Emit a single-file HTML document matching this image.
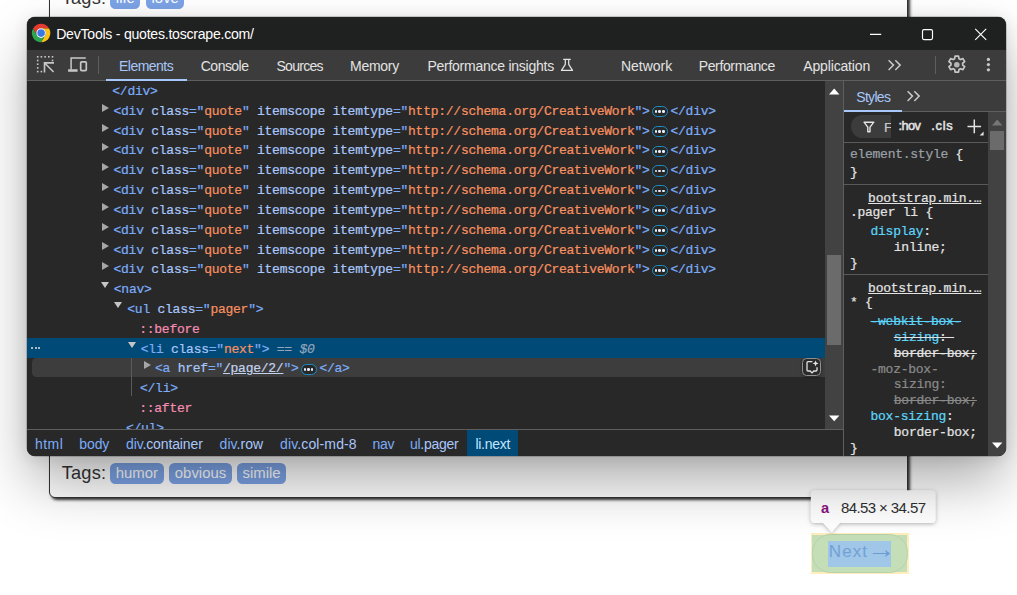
<!DOCTYPE html>
<html lang="en">
<head>
<meta charset="utf-8">
<title>DevTools - quotes.toscrape.com/</title>
<style>
*{box-sizing:border-box;margin:0;padding:0}
html,body{width:1017px;height:595px;overflow:hidden;background:#fff}
body{position:relative;font-family:"Liberation Sans",Arial,sans-serif;color:#333}
.abs{position:absolute}
/* ---------- page behind ---------- */
.qbox{position:absolute;left:49px;width:859px;border:1px solid #333;border-radius:6px;box-shadow:2px 2px 3px #333;background:#fff}
.tagsrow{position:absolute;left:62px;height:24px;white-space:nowrap}
.tagsrow .lbl{position:absolute;left:-.3px;top:-1.4px;font-size:18.2px;line-height:24px;color:#333;letter-spacing:.2px}
.tag{position:absolute;top:1.3px;height:20.6px;border-radius:5.5px;background:#7ca3e6;color:#fff;font-size:14.9px;line-height:20.6px;text-align:center}
/* ---------- devtools window ---------- */
#win{position:absolute;left:27px;top:17px;width:978.7px;height:438.6px;border-radius:8px;background:#282828;
 box-shadow:0 0 0 .5px rgba(0,0,0,.35),0 28px 56px -2px rgba(0,0,0,.32),0 2px 16px rgba(0,0,0,.11);overflow:hidden}
#title{position:absolute;left:0;top:0;right:0;height:33px;background:#1f2020}
#title .t{position:absolute;left:29.2px;top:8px;font-size:14.1px;line-height:18px;color:#fff;white-space:nowrap;letter-spacing:-.25px}
#tb{position:absolute;left:0;top:33px;right:0;height:31.3px;background:#3c3c3c;border-bottom:1px solid #5e5e5e}
.tab{position:absolute;top:7.2px;font-size:14px;line-height:18px;color:#e3e3e3;white-space:nowrap}
.tab.sel{color:#a8c7fa}
/* elements tree */
#tree{position:absolute;left:0;top:64.3px;width:798px;height:348px;background:#282828;overflow:hidden;
 font-family:"Liberation Mono","DejaVu Sans Mono",monospace;font-size:13px;letter-spacing:-.252px;color:#e3e3e3;-webkit-text-stroke:.22px}
.row{position:absolute;left:0;width:798px;height:19.82px;line-height:19.82px;white-space:pre}
.row span.c{position:absolute;top:1.6px}
.tg{color:#7cacf8}.an{color:#a8c7fa}.av{color:#f89060}.ps{color:#f58cb2}.gr{color:#9aa0a6}
.arr{position:absolute;width:0;height:0}
.arr.r{border-left:7px solid #a6a6a6;border-top:4.1px solid transparent;border-bottom:4.1px solid transparent}
.arr.d{border-top:6.9px solid #c6c6c6;border-left:4.6px solid transparent;border-right:4.6px solid transparent}
.pill{position:absolute;width:16.4px;height:11.2px;border:1.5px solid #1b8fc4;border-radius:5.6px;background:#282828}
.pill i{position:absolute;top:3.3px;width:2.7px;height:2.7px;border-radius:50%;background:#e4eefb}
.selrow{background:#004a77}
.dots{position:absolute;left:4px;top:8.6px;width:10px;height:2px}
.dots i{position:absolute;top:0;width:2px;height:2px;border-radius:1px;background:#e3e3e3}
.dots i:nth-child(1){left:0}.dots i:nth-child(2){left:3.7px}.dots i:nth-child(3){left:7.4px}
.eq{color:#93a5ba}.eq em{font-style:italic}
.lk{color:#c3d3ee;text-decoration:underline}
.hovbg{position:absolute;left:5.4px;top:.3px;width:793px;height:18.7px;border-radius:4.5px 0 0 4.5px;background:#3d3d3d}
.ai{position:absolute;left:775px;top:.3px;width:19.2px;height:17.8px;border:1px solid #909090;border-radius:4.5px;background:#2b2b2b;box-shadow:0 1px 3px rgba(0,0,0,.4)}
.guide{position:absolute;left:104px;top:276.6px;width:1px;height:38.6px;background:#5a5a5a}
.row .pill{position:relative;display:inline-block;vertical-align:-2.4px;margin:0 2.4px 0 2.1px}
/* sidebar */
#side{position:absolute;left:816.3px;top:64.3px;right:0;bottom:0;background:#282828;border-left:1px solid #5e5e5e;
 font-family:"Liberation Mono","DejaVu Sans Mono",monospace;font-size:13px;letter-spacing:-.252px;color:#e3e3e3;-webkit-text-stroke:.22px}
.sl{position:absolute;white-space:pre;line-height:16px;height:16px}
.cy{color:#5cd5fb}.dim{color:#8a8a8a}.st{text-decoration:line-through}
.lnk{text-decoration:underline}
.sep{position:absolute;left:0;width:144px;height:1px;background:#5a5a5a}
/* crumbs */
#crumbs{position:absolute;left:0;top:412.3px;width:818px;height:27px;background:#282828;border-top:1px solid #5e5e5e}
.cr{position:absolute;top:4.6px;font-size:14px;line-height:18px;white-space:nowrap;color:#a8c7fa}
.cr b{font-weight:normal;color:#7cacf8}
</style>
</head>
<body>

<!-- page behind the DevTools window -->
<div class="qbox" style="top:-80px;height:110px"></div>
<div class="tagsrow" style="top:-12.9px">
  <span class="lbl">Tags:</span>
  <span class="tag" style="left:48.3px;width:30.2px">life</span>
  <span class="tag" style="left:84.2px;width:38.1px">love</span>
</div>
<div class="qbox" style="top:380px;height:117.8px"></div>
<div class="tagsrow" style="top:462px">
  <span class="lbl">Tags:</span>
  <span class="tag" style="left:48.2px;width:53.4px">humor</span>
  <span class="tag" style="left:107.2px;width:62.6px">obvious</span>
  <span class="tag" style="left:175.4px;width:48.4px">simile</span>
</div>

<!-- inspect highlight on the Next link -->
<div class="abs" style="left:810.9px;top:533.1px;width:97.9px;height:40.6px;background:#ffeebc"></div>
<div class="abs" style="left:812.2px;top:534.5px;width:95px;height:37.8px;background:#c4dfb8"></div>
<div class="abs" style="left:811.6px;top:533.9px;width:96.2px;height:39px;border:1px solid #b7d2ab;border-radius:18.5px"></div>
<div class="abs" style="left:828px;top:540.5px;width:63.2px;height:26.1px;background:#a0c6e8"></div>
<div class="abs" id="next" style="left:828.8px;top:540.2px;font-size:17px;line-height:24px;color:#72a1d5;white-space:nowrap;letter-spacing:1.1px">Next</div>
<div class="abs" id="narr" style="left:867.3px;top:537.7px;font-size:17px;line-height:24px;color:#6a9bd2;white-space:nowrap;transform:scale(1.7,1.5);transform-origin:0 50%">→</div>

<!-- tooltip -->
<svg class="abs" style="left:796px;top:478px;overflow:visible" width="155" height="70" viewBox="0 0 155 70">
  <defs><filter id="tsh" x="-20%" y="-30%" width="140%" height="170%"><feDropShadow dx="0" dy="1" stdDeviation="2.2" flood-color="#000" flood-opacity=".3"/></filter></defs>
  <path filter="url(#tsh)" fill="#fff" d="M18.9 12.2H135.5a4 4 0 0 1 4 4V40.9a4 4 0 0 1 -4 4H43.9L35.6 54.1L27.3 44.9H18.9a4 4 0 0 1 -4 -4V16.2a4 4 0 0 1 4 -4Z"/>
</svg>
<div class="abs" style="left:821px;top:498.7px;font-size:14.6px;line-height:18px;font-weight:bold;color:#881280">a</div>
<div class="abs" id="dims" style="left:841px;top:498.9px;font-size:15px;line-height:18px;color:#303030;white-space:nowrap;letter-spacing:-.6px">84.53 × 34.57</div>

<!-- DevTools window -->
<div id="win">
  <div id="title">
    <svg class="abs" style="left:3.85px;top:5.85px" width="20.2" height="20.2" viewBox="0 0 48 48">
      <path d="M4.95 13A22 22 0 0 1 43.05 13L24 13A11 11 0 0 0 14.47 29.5Z" fill="#e33b2e"/>
      <path d="M43.05 13A22 22 0 0 1 24 46L33.53 29.5A11 11 0 0 0 24 13Z" fill="#fbc116"/>
      <path d="M24 46A22 22 0 0 1 4.95 13L14.47 29.5A11 11 0 0 0 33.53 29.5Z" fill="#2da44e"/>
      <circle cx="24" cy="24" r="11.4" fill="#fff"/>
      <circle cx="24" cy="24" r="9" fill="#3b78e7"/>
    </svg>
    <div class="t">DevTools - quotes.toscrape.com/</div>
    <svg class="abs" style="left:836px;top:6px" width="130" height="24" viewBox="0 0 130 24" fill="none" stroke="#fff" stroke-width="1.15">
      <path d="M7 11.3H18.2"/>
      <rect x="59.5" y="6.6" width="10" height="10" rx="1.5"/>
      <path d="M112.2 5.9L123.2 16.9M123.2 5.9L112.2 16.9"/>
    </svg>
  </div>

  <div id="tb">
    <svg class="abs" style="left:9px;top:5px" width="20" height="20" viewBox="0 0 20 20" fill="#c7c7c7">
      <rect x="0.9" y="1" width="1.6" height="1.6"/><rect x="4.6" y="1" width="1.6" height="1.6"/><rect x="8.3" y="1" width="1.6" height="1.6"/><rect x="12" y="1" width="1.6" height="1.6"/><rect x="15.7" y="1" width="1.6" height="1.6"/>
      <rect x="0.9" y="4.7" width="1.6" height="1.6"/><rect x="0.9" y="8.4" width="1.6" height="1.6"/><rect x="0.9" y="12.1" width="1.6" height="1.6"/><rect x="0.9" y="15.8" width="1.6" height="1.6"/>
      <rect x="15.7" y="4.7" width="1.6" height="1.6"/><rect x="4.6" y="15.8" width="1.6" height="1.6"/>
      <path d="M8.5 17.5V7.9H18M8.9 8.3L17.6 17" fill="none" stroke="#c7c7c7" stroke-width="1.6"/>
    </svg>
    <svg class="abs" style="left:40px;top:6px" width="22" height="18" viewBox="0 0 22 18" fill="none" stroke="#c7c7c7">
      <path d="M4.1 13.6V2H18.8" stroke-width="1.5"/>
      <path d="M1.1 14.5H10.6" stroke-width="2.3"/>
      <rect x="13.7" y="5.8" width="5.6" height="8.8" rx="1" stroke-width="1.7"/>
    </svg>
    <div class="abs" style="left:71px;top:6px;width:1px;height:17.6px;background:#5e5e5e"></div>
    <svg class="abs" style="left:533px;top:8px" width="14" height="14" viewBox="0 0 14 14" fill="none" stroke="#e3e3e3" stroke-width="1.25" stroke-linejoin="round" stroke-linecap="round">
      <path d="M3.7 1.4H10.3M5.3 1.6V6.3L1.5 12.4H12.5L8.7 6.3V1.6"/>
    </svg>
    <svg class="abs" style="left:860px;top:9px" width="16" height="12" viewBox="0 0 16 12" fill="none" stroke="#c7c7c7" stroke-width="1.5">
      <path d="M1.6 1.2L6.5 6.1L1.6 11M8.3 1.2L13.2 6.1L8.3 11"/>
    </svg>
    <div class="abs" style="left:908px;top:6px;width:1px;height:17.6px;background:#5e5e5e"></div>
    <svg class="abs" style="left:918.75px;top:3.9px" width="21.6" height="21.6" viewBox="0 0 24 24" fill="none" stroke="#c7c7c7" stroke-width="1.9" stroke-linejoin="round">
      <path d="M10.1 2.3h3.8l.5 2.9 1.7.95 2.75-1.05 1.9 3.3-2.25 1.9v1.9l2.25 1.9-1.9 3.3-2.75-1.05-1.7.95-.5 2.9h-3.8l-.5-2.9-1.7-.95-2.75 1.05-1.9-3.3 2.25-1.9v-1.9l-2.25-1.9 1.9-3.3 2.75 1.05 1.7-.95z"/>
      <circle cx="12" cy="12" r="3.1" fill="#b4b4b4" stroke="none"/>
    </svg>
    <svg class="abs" style="left:957px;top:6px" width="9" height="20" viewBox="0 0 9 20" fill="#c7c7c7">
      <circle cx="4.4" cy="3.4" r="1.65"/><circle cx="4.4" cy="8.6" r="1.65"/><circle cx="4.4" cy="13.8" r="1.65"/>
    </svg>
    <div class="tab sel" id="t1" style="left:92.00px;letter-spacing:-0.529px">Elements</div>
    <div class="abs" style="left:79.3px;top:28.9px;width:81px;height:2.4px;background:#a8c7fa"></div>
    <div class="tab" id="t2" style="left:173.80px;letter-spacing:-0.534px">Console</div>
    <div class="tab" id="t3" style="left:249.50px;letter-spacing:-0.733px">Sources</div>
    <div class="tab" id="t4" style="left:323.00px;letter-spacing:-0.280px">Memory</div>
    <div class="tab" id="t5" style="left:400.40px;letter-spacing:-0.247px">Performance insights</div>
    <div class="tab" id="t6" style="left:593.90px;letter-spacing:-0.017px">Network</div>
    <div class="tab" id="t7" style="left:671.70px;letter-spacing:-0.360px">Performance</div>
    <div class="tab" id="t8" style="left:776.30px;letter-spacing:-0.160px">Application</div>
  </div>

  <div id="tree">
    <div class="row" style="top:-0.90px"><span class="c" style="left:85.3px"><span class="tg">&lt;/div&gt;</span></span></div>
    <div class="row" style="top:18.92px"><i class="arr r" style="left:75px;top:3.5px"></i><span class="c" style="left:86.5px"><span class="tg">&lt;div</span> <span class="an">class</span><span class="tg">="</span><span class="av">quote</span><span class="tg">"</span> <span class="an">itemscope</span> <span class="an">itemtype</span><span class="tg">="</span><span class="av">http://schema.org/CreativeWork</span><span class="tg">"&gt;</span><span class="pill"><i style="left:2px"></i><i style="left:5.6px"></i><i style="left:9.2px"></i></span><span class="tg">&lt;/div&gt;</span></span></div>
    <div class="row" style="top:38.74px"><i class="arr r" style="left:75px;top:3.5px"></i><span class="c" style="left:86.5px"><span class="tg">&lt;div</span> <span class="an">class</span><span class="tg">="</span><span class="av">quote</span><span class="tg">"</span> <span class="an">itemscope</span> <span class="an">itemtype</span><span class="tg">="</span><span class="av">http://schema.org/CreativeWork</span><span class="tg">"&gt;</span><span class="pill"><i style="left:2px"></i><i style="left:5.6px"></i><i style="left:9.2px"></i></span><span class="tg">&lt;/div&gt;</span></span></div>
    <div class="row" style="top:58.56px"><i class="arr r" style="left:75px;top:3.5px"></i><span class="c" style="left:86.5px"><span class="tg">&lt;div</span> <span class="an">class</span><span class="tg">="</span><span class="av">quote</span><span class="tg">"</span> <span class="an">itemscope</span> <span class="an">itemtype</span><span class="tg">="</span><span class="av">http://schema.org/CreativeWork</span><span class="tg">"&gt;</span><span class="pill"><i style="left:2px"></i><i style="left:5.6px"></i><i style="left:9.2px"></i></span><span class="tg">&lt;/div&gt;</span></span></div>
    <div class="row" style="top:78.38px"><i class="arr r" style="left:75px;top:3.5px"></i><span class="c" style="left:86.5px"><span class="tg">&lt;div</span> <span class="an">class</span><span class="tg">="</span><span class="av">quote</span><span class="tg">"</span> <span class="an">itemscope</span> <span class="an">itemtype</span><span class="tg">="</span><span class="av">http://schema.org/CreativeWork</span><span class="tg">"&gt;</span><span class="pill"><i style="left:2px"></i><i style="left:5.6px"></i><i style="left:9.2px"></i></span><span class="tg">&lt;/div&gt;</span></span></div>
    <div class="row" style="top:98.20px"><i class="arr r" style="left:75px;top:3.5px"></i><span class="c" style="left:86.5px"><span class="tg">&lt;div</span> <span class="an">class</span><span class="tg">="</span><span class="av">quote</span><span class="tg">"</span> <span class="an">itemscope</span> <span class="an">itemtype</span><span class="tg">="</span><span class="av">http://schema.org/CreativeWork</span><span class="tg">"&gt;</span><span class="pill"><i style="left:2px"></i><i style="left:5.6px"></i><i style="left:9.2px"></i></span><span class="tg">&lt;/div&gt;</span></span></div>
    <div class="row" style="top:118.02px"><i class="arr r" style="left:75px;top:3.5px"></i><span class="c" style="left:86.5px"><span class="tg">&lt;div</span> <span class="an">class</span><span class="tg">="</span><span class="av">quote</span><span class="tg">"</span> <span class="an">itemscope</span> <span class="an">itemtype</span><span class="tg">="</span><span class="av">http://schema.org/CreativeWork</span><span class="tg">"&gt;</span><span class="pill"><i style="left:2px"></i><i style="left:5.6px"></i><i style="left:9.2px"></i></span><span class="tg">&lt;/div&gt;</span></span></div>
    <div class="row" style="top:137.84px"><i class="arr r" style="left:75px;top:3.5px"></i><span class="c" style="left:86.5px"><span class="tg">&lt;div</span> <span class="an">class</span><span class="tg">="</span><span class="av">quote</span><span class="tg">"</span> <span class="an">itemscope</span> <span class="an">itemtype</span><span class="tg">="</span><span class="av">http://schema.org/CreativeWork</span><span class="tg">"&gt;</span><span class="pill"><i style="left:2px"></i><i style="left:5.6px"></i><i style="left:9.2px"></i></span><span class="tg">&lt;/div&gt;</span></span></div>
    <div class="row" style="top:157.66px"><i class="arr r" style="left:75px;top:3.5px"></i><span class="c" style="left:86.5px"><span class="tg">&lt;div</span> <span class="an">class</span><span class="tg">="</span><span class="av">quote</span><span class="tg">"</span> <span class="an">itemscope</span> <span class="an">itemtype</span><span class="tg">="</span><span class="av">http://schema.org/CreativeWork</span><span class="tg">"&gt;</span><span class="pill"><i style="left:2px"></i><i style="left:5.6px"></i><i style="left:9.2px"></i></span><span class="tg">&lt;/div&gt;</span></span></div>
    <div class="row" style="top:177.48px"><i class="arr r" style="left:75px;top:3.5px"></i><span class="c" style="left:86.5px"><span class="tg">&lt;div</span> <span class="an">class</span><span class="tg">="</span><span class="av">quote</span><span class="tg">"</span> <span class="an">itemscope</span> <span class="an">itemtype</span><span class="tg">="</span><span class="av">http://schema.org/CreativeWork</span><span class="tg">"&gt;</span><span class="pill"><i style="left:2px"></i><i style="left:5.6px"></i><i style="left:9.2px"></i></span><span class="tg">&lt;/div&gt;</span></span></div>
    <div class="row" style="top:197.30px"><i class="arr d" style="left:73.7px;top:3.7px"></i><span class="c" style="left:86.8px"><span class="tg">&lt;nav&gt;</span></span></div>
    <div class="row" style="top:217.12px"><i class="arr d" style="left:87.4px;top:3.7px"></i><span class="c" style="left:100.3px"><span class="tg">&lt;ul</span> <span class="an">class</span><span class="tg">="</span><span class="av">pager</span><span class="tg">"&gt;</span></span></div>
    <div class="row" style="top:236.94px"><span class="c" style="left:112.2px"><span class="ps">::before</span></span></div>
    <div class="row selrow" style="top:256.76px"><span class="dots"><i></i><i></i><i></i></span><i class="arr d" style="left:100.6px;top:3.7px"></i><span class="c" style="left:113.8px"><span class="tg">&lt;li</span> <span class="an">class</span><span class="tg">="</span><span class="av">next</span><span class="tg">"&gt;</span><span class="eq"> == <em>$0</em></span></span></div>
    <div class="row hov" style="top:276.58px"><span class="hovbg"></span><i class="arr r" style="left:116.8px;top:3.5px"></i><span class="ai"><svg style="position:absolute;left:-1px;top:-1px" width="19.2" height="17.8" viewBox="0 0 19.2 17.8"><path d="M10.4 3.6H6a1 1 0 0 0 -1 1V12a1 1 0 0 0 1 1H8.2L10 14.9L11.8 13H14a1 1 0 0 0 1 -1V9.2" fill="none" stroke="#e3e3e3" stroke-width="1.3"/><path d="M13.6 2.4L14.45 4.55L16.6 5.4L14.45 6.25L13.6 8.4L12.75 6.25L10.6 5.4L12.75 4.55Z" fill="#e3e3e3"/></svg></span><span class="c" style="left:128px"><span class="tg">&lt;a</span> <span class="an">href</span><span class="tg">="</span><span class="lk">/page/2/</span><span class="tg">"&gt;</span><span class="pill"><i style="left:2px"></i><i style="left:5.6px"></i><i style="left:9.2px"></i></span><span class="tg">&lt;/a&gt;</span></span></div>
    <div class="row" style="top:296.40px"><span class="c" style="left:113px"><span class="tg">&lt;/li&gt;</span></span></div>
    <div class="row" style="top:316.22px"><span class="c" style="left:112.2px"><span class="ps">::after</span></span></div>
    <div class="row" style="top:336.04px"><span class="c" style="left:99px"><span class="tg">&lt;/ul&gt;</span></span></div>
    <i class="guide"></i>
  </div>
  <div class="abs" id="sb1" style="left:797.6px;top:64.3px;width:18.8px;height:348px;background:#424242">
    <i class="abs" style="left:2.2px;top:173.8px;width:14.6px;height:90.3px;background:#6b6b6b"></i>
    <svg class="abs" style="left:4.9px;top:6.3px" width="11" height="7" viewBox="0 0 11 7"><path d="M0 6.4H10.4L5.2 0.6Z" fill="#fff"/></svg>
    <svg class="abs" style="left:4.6px;top:334px" width="11" height="7" viewBox="0 0 11 7"><path d="M0 0.4H10.4L5.2 6.2Z" fill="#fff"/></svg>
  </div>
  <div id="crumbs">
    <span class="cr" id="c1" style="left:8px;letter-spacing:0.45px"><b>html</b></span>
    <span class="cr" id="c2" style="left:52.20px;letter-spacing:-0.066px"><b>body</b></span>
    <span class="cr" id="c3" style="left:99.00px;letter-spacing:-0.125px"><b>div</b>.container</span>
    <span class="cr" id="c4" style="left:192.60px;letter-spacing:0.051px"><b>div</b>.row</span>
    <span class="cr" id="c5" style="left:253.00px;letter-spacing:0.128px"><b>div</b>.col-md-8</span>
    <span class="cr" id="c6" style="left:345.4px;letter-spacing:-0.2px"><b>nav</b></span>
    <span class="cr" id="c7" style="left:383px;letter-spacing:-0.272px"><b>ul</b>.pager</span>
    <i class="abs" style="left:440.3px;top:0;width:50.7px;height:27px;background:#004a77"></i>
    <span class="cr" id="c8" style="left:448.40px;color:#c2e7ff;letter-spacing:-0.283px">li.next</span>
  </div>
  <div id="side">
    <div class="abs" style="left:0;top:0;right:0;height:30.7px;background:#3c3c3c;border-bottom:1px solid #5e5e5e"></div>
    <div class="abs" id="stl" style="-webkit-text-stroke:0;left:12.0px;top:6.8px;font-family:'Liberation Sans',sans-serif;font-size:14px;line-height:18px;color:#a8c7fa;letter-spacing:-0.7px">Styles</div>
    <div class="abs" style="left:0;top:28.4px;width:57.3px;height:2.3px;background:#a8c7fa"></div>
    <svg class="abs" style="left:62.2px;top:9px" width="16" height="12" viewBox="0 0 16 12" fill="none" stroke="#c7c7c7" stroke-width="1.5">
      <path d="M1.6 1.2L6.5 6.1L1.6 11M8.3 1.2L13.2 6.1L8.3 11"/>
    </svg>
    <!-- filter bar -->
    <div class="abs" style="left:6.5px;top:33.4px;width:40px;height:23.4px;background:#3c3c3c;border-radius:11.7px 0 0 11.7px"></div>
    <svg class="abs" style="left:18.8px;top:40px" width="12" height="12" viewBox="0 0 12 12" fill="none" stroke="#e3e3e3" stroke-width="1.4" stroke-linejoin="round"><path d="M1 1.2H10.8L7 6.2V10.8H4.8V6.2Z"/></svg>
    <div class="abs" style="left:39.6px;top:37.5px;width:6.8px;height:18px;overflow:hidden;font-family:'Liberation Sans',sans-serif;font-size:13.6px;line-height:18px;color:#c7c7c7">Filter</div>
    <div class="abs" id="hov" style="left:54.3px;top:36.2px;font-family:'Liberation Sans',sans-serif;font-size:12.8px;line-height:18px;color:#e3e3e3;-webkit-text-stroke:.5px #e3e3e3;letter-spacing:-0.6px">:hov</div>
    <div class="abs" id="cls" style="left:87.0px;top:36.2px;font-family:'Liberation Sans',sans-serif;font-size:12.8px;line-height:18px;color:#e3e3e3;-webkit-text-stroke:.5px #e3e3e3;letter-spacing:0.75px">.cls</div>
    <svg class="abs" style="left:122.2px;top:37px" width="20" height="20" viewBox="0 0 20 20"><path d="M8.3 1.6V15.2M1.5 8.4H15.1" stroke="#e3e3e3" stroke-width="1.5" fill="none"/><path d="M17.6 13.6V17.6H13.6Z" fill="#e3e3e3"/></svg>
    <i class="sep" style="top:60.4px"></i>
    <!-- element.style -->
    <span class="sl" style="left:5.6px;top:66.2px"><span class="gr">element.style</span> {</span>
    <span class="sl" style="left:5.6px;top:83.9px">}</span>
    <i class="sep" style="top:102.4px"></i>
    <!-- .pager li -->
    <span class="sl lnk" style="left:23.8px;top:110.2px">bootstrap.min.…</span>
    <span class="sl" style="left:5.6px;top:124px">.pager li {</span>
    <span class="sl" style="left:26.2px;top:142.5px"><span class="cy">display</span>:</span>
    <span class="sl" style="left:49.5px;top:158.4px">inline;</span>
    <span class="sl" style="left:5.6px;top:174.3px">}</span>
    <i class="sep" style="top:192.3px"></i>
    <!-- * -->
    <span class="sl lnk" style="left:23.8px;top:200px">bootstrap.min.…</span>
    <span class="sl" style="left:5.6px;top:214px">* {</span>
    <span class="sl st cy" style="left:26.2px;top:232.6px">-webkit-box-</span>
    <span class="sl st" style="left:49.5px;top:248.5px"><span class="cy">sizing</span>: </span>
    <span class="sl st" style="left:49.5px;top:264.4px">border-box;</span>
    <span class="sl dim" style="left:26.2px;top:280.3px">-moz-box-</span>
    <span class="sl dim" style="left:49.5px;top:296.2px">sizing:</span>
    <span class="sl dim st" style="left:49.5px;top:312.1px">border-box;</span>
    <span class="sl" style="left:26.2px;top:328px"><span class="cy">box-sizing</span>:</span>
    <span class="sl" style="left:49.5px;top:343.9px">border-box;</span>
    <span class="sl" style="left:5.6px;top:359.8px">}</span>
    <!-- styles scrollbar -->
    <div class="abs" style="left:144px;top:30.7px;right:0;bottom:0;background:#424242">
      <i class="abs" style="left:2px;top:19.4px;width:14.2px;height:18.2px;background:#6b6b6b"></i>
      <svg class="abs" style="left:4px;top:6.6px" width="11" height="7" viewBox="0 0 11 7"><path d="M0 6.4H10.4L5.2 0.6Z" fill="#767676"/></svg>
      <svg class="abs" style="left:4px;top:329.6px" width="11" height="7" viewBox="0 0 11 7"><path d="M0 0.4H10.4L5.2 6.2Z" fill="#fff"/></svg>
    </div>
  </div>
</div>

</body>
</html>
